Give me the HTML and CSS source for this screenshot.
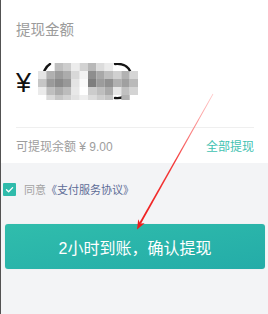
FILE: index.html
```html
<!DOCTYPE html>
<html lang="zh-CN">
<head>
<meta charset="utf-8">
<title>提现</title>
<link rel="stylesheet" href="styles.css">
</head>
<body>
<section class="card">
  <div class="title">提现金额</div>
  <div class="amount">
    <span class="yen">¥</span>
    <svg class="mosaic" width="100" height="40" viewBox="0 0 100 40">
      <g fill="none" stroke="#151515" stroke-width="2.4" stroke-linecap="round">
        <path d="M12,1 Q4,6 5,20"/>
        <path d="M77,1 Q88,0 92,8"/>
        <path d="M77,35 Q87,36 90,29"/>
      </g>
      <g>
        <rect x="16.67" y="0" width="8.4" height="8" fill="#bfbfbf"/>
        <rect x="25" y="0" width="8.4" height="8" fill="#cdcdcd"/>
        <rect x="33.33" y="0" width="8.4" height="8" fill="#ececec"/>
        <rect x="41.67" y="0" width="8.4" height="8" fill="#d2d2d2"/>
        <rect x="50" y="0" width="8.4" height="8" fill="#b8b8b8"/>
        <rect x="58.33" y="0" width="8.4" height="8" fill="#dcdcdc"/>
        <rect x="66.67" y="0" width="8.4" height="8" fill="#ebebeb"/>

        <rect x="0" y="8" width="8.4" height="8" fill="#e4e4e4"/>
        <rect x="8.33" y="8" width="8.4" height="8" fill="#b0b0b0"/>
        <rect x="16.67" y="8" width="8.4" height="8" fill="#9c9c9c"/>
        <rect x="25" y="8" width="8.4" height="8" fill="#acacac"/>
        <rect x="33.33" y="8" width="8.4" height="8" fill="#d8d8d8"/>
        <rect x="41.67" y="8" width="8.4" height="8" fill="#f2f2f2"/>
        <rect x="50" y="8" width="8.4" height="8" fill="#8e8e8e"/>
        <rect x="58.33" y="8" width="8.4" height="8" fill="#a8a8a8"/>
        <rect x="66.67" y="8" width="8.4" height="8" fill="#bebebe"/>
        <rect x="75" y="8" width="8.4" height="8" fill="#d0d0d0"/>
        <rect x="83.33" y="8" width="8.4" height="8" fill="#b2b2b2"/>
        <rect x="91.67" y="8" width="8.33" height="8" fill="#d6d6d6"/>

        <rect x="0" y="16" width="8.4" height="8" fill="#c6c6c6"/>
        <rect x="8.33" y="16" width="8.4" height="8" fill="#9a9a9a"/>
        <rect x="16.67" y="16" width="8.4" height="8" fill="#8a8a8a"/>
        <rect x="25" y="16" width="8.4" height="8" fill="#989898"/>
        <rect x="33.33" y="16" width="8.4" height="8" fill="#e4e4e4"/>
        <rect x="41.67" y="16" width="8.4" height="8" fill="#fafafa"/>
        <rect x="50" y="16" width="8.4" height="8" fill="#7e7e7e"/>
        <rect x="58.33" y="16" width="8.4" height="8" fill="#9c9c9c"/>
        <rect x="66.67" y="16" width="8.4" height="8" fill="#909090"/>
        <rect x="75" y="16" width="8.4" height="8" fill="#b0b0b0"/>
        <rect x="83.33" y="16" width="8.4" height="8" fill="#a0a0a0"/>
        <rect x="91.67" y="16" width="8.33" height="8" fill="#bababa"/>

        <rect x="0" y="24" width="8.4" height="8" fill="#ebebeb"/>
        <rect x="8.33" y="24" width="8.4" height="8" fill="#bfbfbf"/>
        <rect x="16.67" y="24" width="8.4" height="8" fill="#acacac"/>
        <rect x="25" y="24" width="8.4" height="8" fill="#bcbcbc"/>
        <rect x="33.33" y="24" width="8.4" height="8" fill="#e8e8e8"/>
        <rect x="41.67" y="24" width="8.4" height="8" fill="#ffffff"/>
        <rect x="50" y="24" width="8.4" height="8" fill="#cccccc"/>
        <rect x="58.33" y="24" width="8.4" height="8" fill="#bebebe"/>
        <rect x="66.67" y="24" width="8.4" height="8" fill="#aaaaaa"/>
        <rect x="75" y="24" width="8.4" height="8" fill="#e6e6e6"/>
        <rect x="83.33" y="24" width="8.4" height="8" fill="#c0c0c0"/>
        <rect x="91.67" y="24" width="8.33" height="8" fill="#d4d4d4"/>

        <rect x="8.33" y="32" width="8.4" height="5" fill="#dadada"/>
        <rect x="16.67" y="32" width="8.4" height="5" fill="#c6c6c6"/>
        <rect x="25" y="32" width="8.4" height="5" fill="#d2d2d2"/>
        <rect x="33.33" y="32" width="8.4" height="5" fill="#e2e2e2"/>
        <rect x="41.67" y="32" width="8.4" height="5" fill="#eeeeee"/>
        <rect x="50" y="32" width="8.4" height="5" fill="#dcdcdc"/>
        <rect x="58.33" y="32" width="8.4" height="5" fill="#cecece"/>
        <rect x="66.67" y="32" width="8.4" height="5" fill="#c4c4c4"/>
        <rect x="83.33" y="32" width="8.4" height="5" fill="#b2b2b2"/>
      </g>
    </svg>
  </div>
  <div class="balance">
    <span class="balance-text">可提现余额 ¥ 9.00</span>
    <span class="withdraw-all">全部提现</span>
  </div>
</section>

<div class="agree">
  <span class="check">
    <svg width="13" height="13" viewBox="0 0 13 13"><path d="M3.5,6.8 L5.6,8.8 L9.6,4.6" fill="none" stroke="#fff" stroke-width="1.3" stroke-linecap="round" stroke-linejoin="round"/></svg>
  </span>
  <span class="agree-text">同意<span class="link">《支付服务协议》</span></span>
</div>

<button class="submit">2小时到账，确认提现</button>

<svg class="arrow" width="267" height="314" viewBox="1 0 267 314">
  <defs>
    <linearGradient id="ag" gradientUnits="userSpaceOnUse" x1="213" y1="94" x2="137" y2="229">
      <stop offset="0" stop-color="#ff8a8a" stop-opacity="0.5"/>
      <stop offset="0.5" stop-color="#f43a3a"/>
      <stop offset="1" stop-color="#ee1c1c"/>
    </linearGradient>
  </defs>
  <polygon points="213.3,94.2 212.7,93.8 139.2,223.0 140.8,224.0" fill="url(#ag)"/>
  <polygon points="137,229.5 144.6,223.2 140.2,223.6 138.2,219.3" fill="#ee1c1c"/>
</svg>
</body>
</html>
```

FILE: styles.css
```css
* {
  box-sizing: border-box;
}

html {
  background: #f3f4f6;
}

body {
  margin: 0;
  width: 268px;
  height: 314px;
  position: relative;
  overflow: hidden;
  background: #f3f4f6;
  border-left: 1px solid #525252;
  font-family: "Liberation Sans", "Noto Sans CJK SC", sans-serif;
}

.card {
  background: #fff;
  padding: 20px 14px 0 15px;
}

.title {
  font-size: 14.5px;
  line-height: 20px;
  color: #9b9b9b;
}

.amount {
  display: flex;
  align-items: center;
  height: 44px;
  margin-top: 21px;
}

.yen {
  font-size: 27px;
  line-height: 1;
  color: #111;
}

.mosaic {
  display: block;
  margin-left: 7px;
}

.balance {
  margin-top: 22px;
  border-top: 1px solid #efefef;
  height: 36px;
  display: flex;
  align-items: center;
  justify-content: space-between;
  font-size: 12px;
}

.balance-text {
  color: #9d9d9d;
}

.withdraw-all {
  color: #3fc2b1;
}

.agree {
  display: flex;
  align-items: center;
  margin-top: 19px;
  padding-left: 2px;
  height: 14px;
}

.check {
  display: block;
  width: 13px;
  height: 13px;
  background: #2fbbab;
  border-radius: 1px;
}

.check svg {
  display: block;
}

.agree-text {
  margin-left: 8px;
  font-size: 11px;
  color: #a3a3a3;
}

.link {
  color: #5d6c96;
}

.submit {
  display: block;
  margin: 28px 0 0 4px;
  width: 260px;
  height: 45px;
  border: 0;
  border-radius: 3px;
  background: linear-gradient(170deg, #30bdac 0%, #24aca8 100%);
  color: #fff;
  font-family: "Liberation Sans", "Noto Sans CJK SC", sans-serif;
  font-size: 16px;
  padding: 0;
  box-shadow: 0 0 1px rgba(0, 0, 0, 0.15);
}

.arrow {
  position: absolute;
  left: 0;
  top: 0;
  pointer-events: none;
}
```
